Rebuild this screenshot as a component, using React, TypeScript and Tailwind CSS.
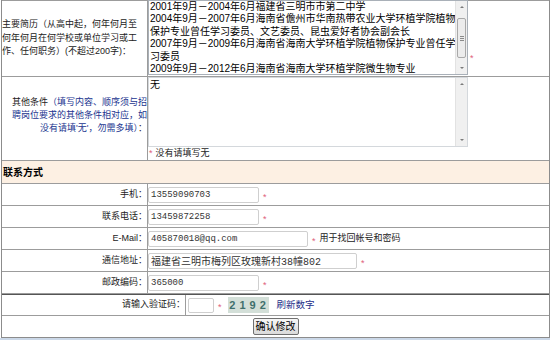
import React from "react";

const resume = [
  "2001年9月－2004年6月福建省三明市市第二中学",
  "2004年9月－2007年6月海南省儋州市华南热带农业大学环植学院植物",
  "保护专业曾任学习委员、文艺委员、昆虫爱好者协会副会长",
  "2007年9月－2009年6月海南省海南大学环植学院植物保护专业曾任学",
  "习委员",
  "2009年9月－2012年6月海南省海南大学环植学院微生物专业",
].join("\n");

type Field = {
  label: string;
  value: string;
  width: string;
  font: string;
  note?: string;
};

const fields: Field[] = [
  { label: "手机", value: "13559090703", width: "w-[111px]", font: "text-[9px]" },
  { label: "联系电话", value: "13459872258", width: "w-[111px]", font: "text-[9px]" },
  { label: "E-Mail", value: "405870018@qq.com", width: "w-[160px]", font: "text-[9px]", note: "用于找回帐号和密码" },
  { label: "通信地址", value: "福建省三明市梅列区玫瑰新村38幢802", width: "w-[209px]", font: "text-[10px]" },
  { label: "邮政编码", value: "365000", width: "w-[111px]", font: "text-[9px]" },
];

function Star() {
  return <span className="text-[9px] leading-none text-[#e0607a]">*</span>;
}

function Arrow({ up }: { up?: boolean }) {
  return (
    <svg width="12" height="12" viewBox="0 0 12 12" className="shrink-0">
      <path d={up ? "M4 7h4L6 5z" : "M4 5h4L6 7z"} fill="#7a7a7a" />
    </svg>
  );
}

// old-style scrollbar drawn next to the textarea
function ScrollBar({ thumb }: { thumb?: boolean }) {
  return (
    <div className="w-[12px] shrink-0 flex flex-col bg-[#f0f0f0] border-l border-[#e2e2e2]">
      <Arrow up />
      <div className="flex-1 flex flex-col">
        {thumb && (
          <div className="mt-[5px] mx-[1px] h-[40px] rounded-[2px] border border-[#a9a9a9] bg-[#ececec] flex flex-col items-center justify-center gap-[1px]">
            <div className="w-[4px] h-[1px] bg-[#8a8a8a]" />
            <div className="w-[4px] h-[1px] bg-[#8a8a8a]" />
            <div className="w-[4px] h-[1px] bg-[#8a8a8a]" />
          </div>
        )}
      </div>
      <Arrow />
    </div>
  );
}

export default function App() {
  return (
    <div className="w-[550px] h-[340px] overflow-hidden bg-white text-[#222] font-['Liberation_Sans','Noto_Sans_CJK_SC',sans-serif]">
      <div className="ml-[1px] w-[549px] border-x border-[#8c8c8c]">
        {/* resume */}
        <div className="flex h-[77px] border-y border-[#9c9c9c]">
          <div className="w-[146px] shrink-0 border-r border-[#9c9c9c] flex items-center text-[9px] leading-[13.5px] whitespace-nowrap">
            <div>
              主要简历（从高中起，何年何月至
              <br />
              何年何月在何学校或单位学习或工
              <br />
              作、任何职务）(不超过200字)：
            </div>
          </div>
          <div className="flex items-end">
            <div className="-mt-[1px] self-start flex w-[320px] h-[75px] border border-[#a9b0b8] bg-white">
              <textarea
                readOnly
                wrap="off"
                defaultValue={resume}
                className="flex-1 min-w-0 h-full px-[1px] text-[10px] leading-[12.4px] text-black whitespace-pre overflow-hidden resize-none outline-none"
              />
              <ScrollBar thumb />
            </div>
            <span className="ml-[2px] mb-[8px]">
              <Star />
            </span>
          </div>
        </div>

        {/* other conditions */}
        <div className="flex h-[84px] border-b border-[#9c9c9c]">
          <div className="w-[146px] shrink-0 border-r border-[#9c9c9c] flex items-center justify-end text-[9px] leading-[13px] whitespace-nowrap text-right pb-[6px]">
            <div>
              其他条件<span className="text-[#22358f]">（填写内容、顺序须与招</span>
              <br />
              <span className="text-[#22358f]">聘岗位要求的其他条件相对应，如</span>
              <br />
              <span className="text-[#22358f]">没有请填'无'，勿需多填）</span>：
            </div>
          </div>
          <div className="flex flex-col">
            <div className="flex w-[320px] h-[70px] border border-[#d4d8dc] bg-white">
              <textarea
                readOnly
                defaultValue="无"
                className="flex-1 min-w-0 h-full px-[1px] text-[10px] leading-[13px] text-black overflow-hidden resize-none outline-none"
              />
              <ScrollBar />
            </div>
            <div className="flex items-center h-[13px] pl-[1px] text-[9px]">
              <Star />
              <span className="ml-[3px]">没有请填写无</span>
            </div>
          </div>
        </div>

        {/* section header */}
        <div className="flex items-center h-[23px] border-b border-[#9c9c9c] bg-[#fdf0e3] pl-[1px] text-[10px] font-bold text-black">
          联系方式
        </div>

        {fields.map((f) => (
          <div key={f.label} className="flex h-[22px] border-b border-[#9c9c9c]">
            <div className="w-[146px] shrink-0 border-r border-[#9c9c9c] flex items-center justify-end text-[9px] whitespace-nowrap">
              {f.label}：
            </div>
            <div className="flex items-center">
              <input
                readOnly
                defaultValue={f.value}
                className={`${f.width} ${f.font} h-[16px] border border-[#cfcfcf] rounded-[2px] px-[2px] text-[#333] outline-none font-['Liberation_Mono','Noto_Sans_CJK_SC',monospace]`}
              />
              <span className="ml-[4px]">
                <Star />
              </span>
              {f.note && <span className="ml-[4px] text-[9px]">{f.note}</span>}
            </div>
          </div>
        ))}

        {/* captcha */}
        <div className="flex h-[22px] border-y border-t-[#555] border-b-[#9c9c9c]">
          <div className="w-[184px] shrink-0 border-r border-[#9c9c9c] flex items-center justify-end text-[9px] whitespace-nowrap">
            请输入验证码：
          </div>
          <div className="flex items-center">
            <input
              readOnly
              className="ml-[2px] w-[26px] h-[15px] border border-[#cfcfcf] rounded-[2px] outline-none"
            />
            <span className="ml-[4px]">
              <Star />
            </span>
            <span className="ml-[6px] w-[41px] h-[16px] flex items-center justify-center bg-[#d3dfd8] text-[11px] font-bold tracking-[4px] pl-[3px] text-[#3f6f6c]">
              2192
            </span>
            <span className="ml-[8px] text-[9.5px] text-[#1c2f8a]">刷新数字</span>
          </div>
        </div>

        {/* submit */}
        <div className="flex items-center justify-center h-[22px] border-b border-[#8c8c8c]">
          <button className="h-[17px] px-[2px] text-[10px] leading-none border border-[#707070] rounded-[2px] bg-linear-to-b from-[#f7f7f7] to-[#dadada] text-black">
            确认修改
          </button>
        </div>
      </div>
      <div className="h-[3px] bg-[#cbd8e8]" />
    </div>
  );
}
